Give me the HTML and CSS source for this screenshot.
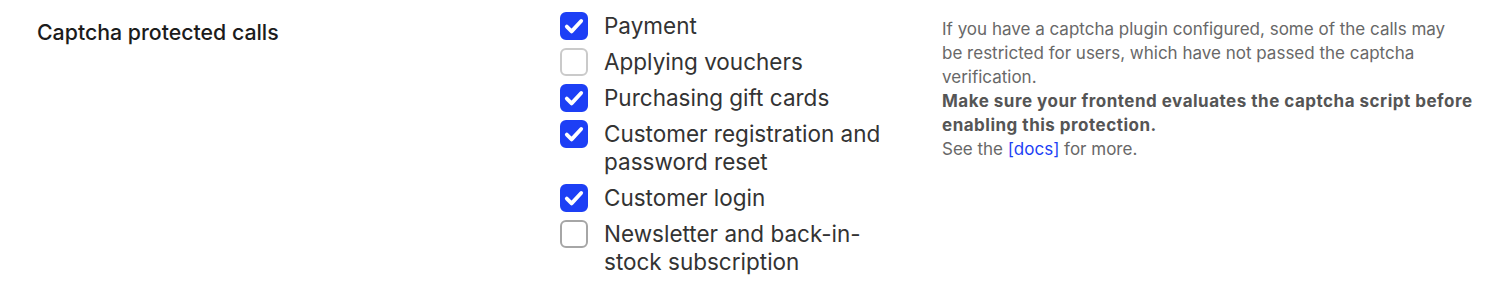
FILE: index.html
```html
<!DOCTYPE html>
<html>
<head>
<meta charset="utf-8">
<link rel="stylesheet" href="styles.css">
</head>
<body>
<div class="section">
  <div class="label-col">
    <div class="title">Captcha protected calls</div>
  </div>
  <div class="options">
    <label class="opt"><span class="box checked"><svg viewBox="0 0 28 28"><polyline points="6.8,14.6 11.6,19.4 21.2,9"/></svg></span><span class="txt">Payment</span></label>
    <label class="opt"><span class="box"></span><span class="txt">Applying vouchers</span></label>
    <label class="opt"><span class="box checked"><svg viewBox="0 0 28 28"><polyline points="6.8,14.6 11.6,19.4 21.2,9"/></svg></span><span class="txt">Purchasing gift cards</span></label>
    <label class="opt"><span class="box checked"><svg viewBox="0 0 28 28"><polyline points="6.8,14.6 11.6,19.4 21.2,9"/></svg></span><span class="txt">Customer registration and password reset</span></label>
    <label class="opt"><span class="box checked"><svg viewBox="0 0 28 28"><polyline points="6.8,14.6 11.6,19.4 21.2,9"/></svg></span><span class="txt">Customer login</span></label>
    <label class="opt"><span class="box hover"></span><span class="txt">Newsletter and back-in-stock subscription</span></label>
  </div>
  <div class="help">
    <p class="intro">If you have a captcha plugin configured, some of the calls may be restricted for users, which have not passed the captcha verification.</p>
    <p class="strong">Make sure your frontend evaluates the captcha script before enabling this protection.</p>
    <p>See the <a href="#">[docs]</a> for more.</p>
  </div>
</div>
</body>
</html>
```

FILE: styles.css
```css
html, body {
  margin: 0;
  padding: 0;
  background: #ffffff;
  font-family: Inter, "Noto Sans", sans-serif;
}
.section {
  display: flex;
  align-items: flex-start;
  padding-top: 12px;
}
.label-col {
  width: 560px;
  padding-left: 37px;
  box-sizing: border-box;
  flex: none;
}
.title {
  font-size: 21.3px;
  font-weight: 500;
  line-height: 28px;
  color: #1c1c1c;
  margin-top: 6px;
}
.options {
  width: 340px;
  flex: none;
  display: flex;
  flex-direction: column;
  gap: 8px;
}
.opt {
  display: flex;
  align-items: flex-start;
  gap: 16px;
}
.box {
  width: 28px;
  height: 28px;
  box-sizing: border-box;
  border-radius: 6px;
  border: 2px solid #cacaca;
  flex: none;
  display: flex;
  align-items: center;
  justify-content: center;
}
.box.hover {
  border-color: #a6a6a6;
}
.box.checked {
  background: #1d3ff5;
  border-color: #1d3ff5;
}
.box svg {
  width: 28px;
  height: 28px;
  flex: none;
}
.box polyline {
  fill: none;
  stroke: #ffffff;
  stroke-width: 3.8;
  stroke-linecap: round;
  stroke-linejoin: round;
}
.txt {
  font-size: 22.5px;
  line-height: 28px;
  color: #333333;
  width: 292px;
}
.help {
  margin-left: 42px;
  width: 545px;
  padding-top: 5px;
  font-size: 17px;
  line-height: 24px;
  color: #686868;
}
.help p {
  margin: 0;
}
.help .intro {
  max-width: 510px;
}
.help .strong {
  font-weight: 700;
  letter-spacing: 0.5px;
  color: #555555;
}
.help a {
  color: #1d3ff5;
  text-decoration: none;
}
```
